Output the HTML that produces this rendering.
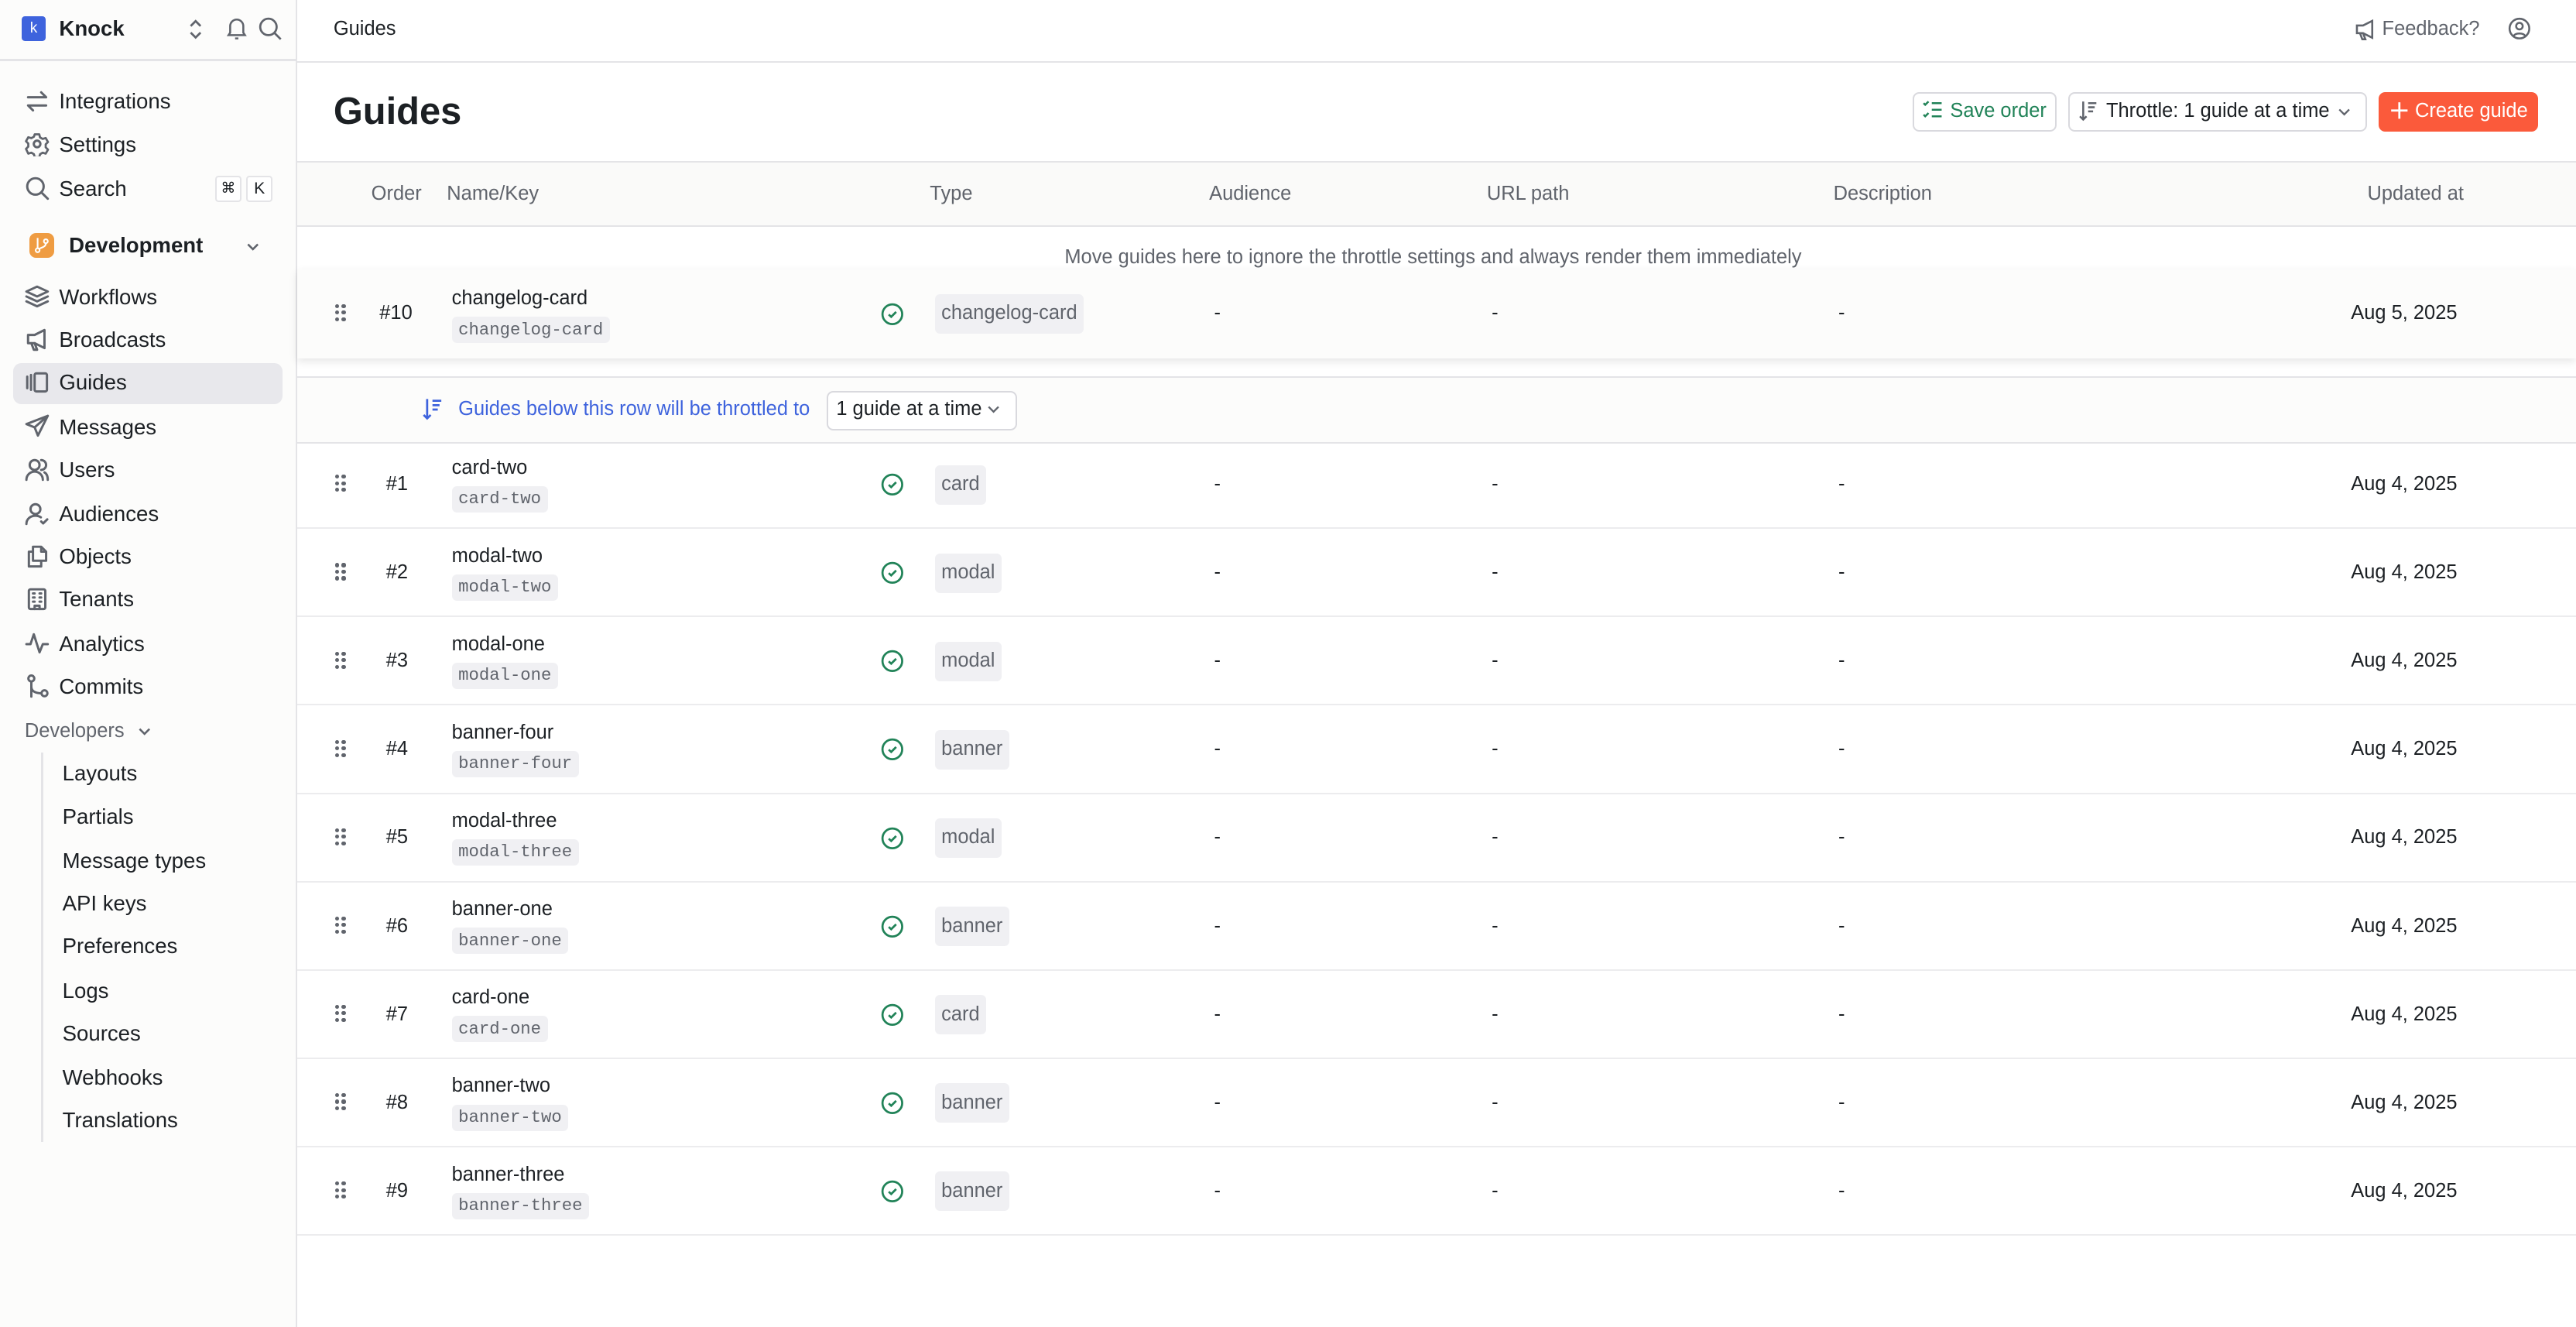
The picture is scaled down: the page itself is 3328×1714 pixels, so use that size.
<!DOCTYPE html>
<html><head><meta charset="utf-8">
<style>
html,body{margin:0;padding:0;background:#fff;overflow:hidden}
body{width:3328px;height:1714px}
#w{zoom:2.12245;width:1568px;height:808px;position:relative;font-family:"Liberation Sans",sans-serif;color:#1c2024;font-size:13px}
.a{position:absolute;white-space:nowrap}
#side{position:absolute;left:0;top:0;width:180px;height:808px;background:#fcfcfb;border-right:1px solid #e4e4e7}
.ni{position:absolute;left:15px;height:20px;line-height:20px;font-size:13px;color:#1c2024}
.ni svg{position:absolute;left:0;top:2px;width:15px;height:15px;fill:none;stroke:#60646c;stroke-width:1.4;stroke-linecap:round;stroke-linejoin:round}
.ni span{position:absolute;left:21px;top:0}
.sub{position:absolute;left:38px;font-size:13px;line-height:20px}
.hd{position:absolute;top:111px;font-size:12px;color:#60646c}
.row{position:absolute;left:181px;width:1387px;height:53px;border-bottom:1px solid #ececee;font-size:12px}
.row .c{position:absolute;line-height:16px}
.chip{display:inline-block;background:#f0f0f3;border-radius:3px;padding:4px 4px;line-height:16px;color:#60646c}
.mono{display:inline-block;font-family:"Liberation Mono",monospace;font-size:10.5px;background:#f0f0f3;border-radius:3px;padding:1px 4px;line-height:14px;color:#60646c}
.dots{position:absolute;left:23px;width:6px;height:11px}
.dots i{position:absolute;width:2.4px;height:2.4px;border-radius:50%;background:#60646c}
.chk{position:absolute;left:355px;width:14px;height:14px}
</style></head><body><div id="w">

<div id="side">
 <div class="a" style="left:13px;top:10px;width:15px;height:15px;background:#3e63dd;border-radius:2px;color:#fff;font-size:9px;text-align:center;line-height:15px">k</div>
 <div class="a" style="left:36px;top:10px;font-size:13px;font-weight:bold;line-height:15px">Knock</div>
 <svg class="a" style="left:113px;top:11px" width="12" height="14" viewBox="0 0 12 14" fill="none" stroke="#60646c" stroke-width="1.3"><path d="M3 5l3-3 3 3M3 9l3 3 3-3"/></svg>
 <svg class="a" style="left:137px;top:10px" width="14" height="15" viewBox="0 0 14 15" fill="none" stroke="#60646c" stroke-width="1.2"><path d="M3 10V6a4 4 0 018 0v4l1 1.5H2z M6 13.5h2"/></svg>
 <svg class="a" style="left:157px;top:10px" width="15" height="15" viewBox="0 0 15 15" fill="none" stroke="#60646c" stroke-width="1.3"><circle cx="6.5" cy="6.5" r="5"/><path d="M10.2 10.2L14 14"/></svg>
 <div class="a" style="left:0;top:36px;width:180px;height:1px;background:#e4e4e7"></div>

 <div class="ni" style="top:52px"><svg viewBox="0 0 15 15"><path d="M2 5h11l-3-3M13 10H2l3 3"/></svg><span>Integrations</span></div>
 <div class="ni" style="top:78px"><svg viewBox="0 0 15 15"><circle cx="7.5" cy="7.5" r="2"/><path d="M6 1.5h3l.5 2 1.7 1 2-.6 1.5 2.6-1.5 1.5v2l1.5 1.5-1.5 2.6-2-.6-1.7 1-.5 2H6l-.5-2-1.7-1-2 .6L.3 11l1.5-1.5v-2L.3 6l1.5-2.6 2 .6 1.7-1z" transform="scale(.93) translate(.5 .3)"/></svg><span>Settings</span></div>
 <div class="ni" style="top:105px"><svg viewBox="0 0 15 15"><circle cx="6.5" cy="6.5" r="5"/><path d="M10.2 10.2L14 14"/></svg><span>Search</span></div>
 <div class="a" style="left:131px;top:107px;width:14px;height:14px;border:1px solid #e4e4e7;border-radius:2px;background:#fff;font-size:9px;text-align:center;line-height:14px">⌘</div>
 <div class="a" style="left:150px;top:107px;width:14px;height:14px;border:1px solid #e4e4e7;border-radius:2px;background:#fff;font-size:10px;text-align:center;line-height:14px">K</div>

 <div class="a" style="left:18px;top:142px;width:15px;height:15px;background:#ef9c42;border-radius:4px"><svg width="15" height="15" viewBox="0 0 15 15" fill="none" stroke="#fff" stroke-width="1"><circle cx="5" cy="10.5" r="1.2"/><circle cx="10" cy="5" r="1.2"/><path d="M5 3v6.3M10 6.2c0 2.5-3 2.5-4.2 3.5"/></svg></div>
 <div class="a" style="left:42px;top:141px;font-size:13px;font-weight:bold;line-height:17px">Development</div>
 <svg class="a" style="left:148px;top:144px" width="12" height="12" viewBox="0 0 12 12" fill="none" stroke="#60646c" stroke-width="1.2"><path d="M3 4.5l3 3 3-3"/></svg>

 <div class="a" style="left:8px;top:221px;width:164px;height:25px;background:#e8e8ec;border-radius:5px"></div>
 <div class="ni" style="top:171px"><svg viewBox="0 0 15 15"><path d="M7.5 1.5L14 4.5 7.5 7.5 1 4.5z M1 7.5l6.5 3 6.5-3 M1 10.5l6.5 3 6.5-3"/></svg><span>Workflows</span></div>
 <div class="ni" style="top:197px"><svg viewBox="0 0 15 15"><path d="M2 5h4l6-3v11L6 10H2z M4 10l1.5 4h2L6 10"/></svg><span>Broadcasts</span></div>
 <div class="ni" style="top:223px"><svg viewBox="0 0 15 15"><rect x="6" y="2" width="7.5" height="11" rx="1"/><path d="M1.5 4v7M3.8 3v9"/></svg><span>Guides</span></div>
 <div class="ni" style="top:250px"><svg viewBox="0 0 15 15"><path d="M14 1L1 6l5 2 2 5z M6 8l8-7"/></svg><span>Messages</span></div>
 <div class="ni" style="top:276px"><svg viewBox="0 0 15 15"><circle cx="6" cy="5" r="3"/><path d="M1 14c0-3 2.5-5 5-5s5 2 5 5 M10 2a3 3 0 010 6 M12 9.5c1.5.8 2 2.5 2 4.5"/></svg><span>Users</span></div>
 <div class="ni" style="top:303px"><svg viewBox="0 0 15 15"><circle cx="6.5" cy="5" r="3"/><path d="M1 14c0-3 2.5-5 5.5-5 1.5 0 2.5.4 3.3 1 M10 12.5l1.2 1.2 2.5-2.5"/></svg><span>Audiences</span></div>
 <div class="ni" style="top:329px"><svg viewBox="0 0 15 15"><path d="M5 1.5h5l3 3V10H5z M10 1.5v3h3 M5 4.5H2.5V13.5H10V10"/></svg><span>Objects</span></div>
 <div class="ni" style="top:355px"><svg viewBox="0 0 15 15"><rect x="2.5" y="1.5" width="10" height="12" rx="1"/><path d="M5 4h1M9 4h1M5 6.5h1M9 6.5h1M5 9h1M9 9h1M6 13.5v-2h3v2"/></svg><span>Tenants</span></div>
 <div class="ni" style="top:382px"><svg viewBox="0 0 15 15"><path d="M1 8h2.5l2-6 3.5 11 2-5H14"/></svg><span>Analytics</span></div>
 <div class="ni" style="top:408px"><svg viewBox="0 0 15 15"><circle cx="4" cy="3" r="1.8"/><circle cx="12" cy="12" r="1.8"/><path d="M4 5v9M4 8c0 3 3 4 6 4"/></svg><span>Commits</span></div>
 <div class="a" style="left:15px;top:437px;font-size:12px;color:#60646c;line-height:16px">Developers</div>
 <svg class="a" style="left:82px;top:439px" width="12" height="12" viewBox="0 0 12 12" fill="none" stroke="#60646c" stroke-width="1.2"><path d="M3 4.5l3 3 3-3"/></svg>
 <div class="a" style="left:25px;top:458px;width:1.5px;height:237px;background:#e4e4e7"></div>
 <div class="sub" style="top:461px">Layouts</div>
 <div class="sub" style="top:487px">Partials</div>
 <div class="sub" style="top:514px">Message types</div>
 <div class="sub" style="top:540px">API keys</div>
 <div class="sub" style="top:566px">Preferences</div>
 <div class="sub" style="top:593px">Logs</div>
 <div class="sub" style="top:619px">Sources</div>
 <div class="sub" style="top:646px">Webhooks</div>
 <div class="sub" style="top:672px">Translations</div>
</div>

<!-- top bar -->
<div class="a" style="left:203px;top:10px;font-size:12px;line-height:16px">Guides</div>
<div class="a" style="left:181px;top:37px;width:1387px;height:1px;background:#e4e4e7"></div>
<svg class="a" style="left:1433px;top:11px" width="14" height="14" viewBox="0 0 15 15" fill="none" stroke="#60646c" stroke-width="1.3"><path d="M2 5h4l6-3v11L6 10H2z M4 10l1.5 4h2L6 10"/></svg>
<div class="a" style="left:1450px;top:10px;font-size:12px;color:#60646c;line-height:16px">Feedback?</div>
<svg class="a" style="left:1526px;top:10px" width="15" height="15" viewBox="0 0 15 15" fill="none" stroke="#60646c" stroke-width="1.2"><circle cx="7.5" cy="7.5" r="6"/><circle cx="7.5" cy="6" r="2"/><path d="M4 12c1-2 6-2 7 0"/></svg>

<div class="a" style="left:203px;top:54px;font-size:23px;font-weight:bold;line-height:28px">Guides</div>

<div class="a" style="left:1164px;top:56px;width:86px;height:22px;border:1px solid #d9d9de;border-radius:4px;background:#fff"></div>
<svg class="a" style="left:1170px;top:61px" width="13" height="13" viewBox="0 0 13 13" fill="none" stroke="#218358" stroke-width="1.2"><path d="M1 2l1 1 2-2M1 9l1 1 2-2M6 2h6M6 6h6M6 10h6"/></svg>
<div class="a" style="left:1187px;top:60px;font-size:12px;color:#218358;line-height:16px">Save order</div>
<div class="a" style="left:1259px;top:56px;width:180px;height:22px;border:1px solid #d9d9de;border-radius:4px;background:#fff"></div>
<svg class="a" style="left:1265px;top:61px" width="13" height="13" viewBox="0 0 13 13" fill="none" stroke="#60646c" stroke-width="1.2"><path d="M3 1v11M1 10l2 2 2-2M6 2h5M6 4.5h4M6 7h3"/></svg>
<div class="a" style="left:1282px;top:60px;font-size:12px;line-height:16px">Throttle: 1 guide at a time</div>
<svg class="a" style="left:1422px;top:63px" width="10" height="10" viewBox="0 0 10 10" fill="none" stroke="#60646c" stroke-width="1.1"><path d="M2 3.5l3 3 3-3"/></svg>
<div class="a" style="left:1448px;top:56px;width:97px;height:24px;border-radius:4px;background:#fb5a3b"></div>
<svg class="a" style="left:1454px;top:61px" width="13" height="13" viewBox="0 0 13 13" fill="none" stroke="#fff" stroke-width="1.3"><path d="M6.5 1.5v10M1.5 6.5h10"/></svg>
<div class="a" style="left:1470px;top:60px;font-size:12px;color:#fff;line-height:16px">Create guide</div>

<!-- header -->
<div class="a" style="left:181px;top:98px;width:1387px;height:38px;background:#fafaf9;border-top:1px solid #e4e4e7;border-bottom:1px solid #e4e4e7"></div>
<div class="hd" style="left:226px">Order</div>
<div class="hd" style="left:272px">Name/Key</div>
<div class="hd" style="left:566px">Type</div>
<div class="hd" style="left:736px">Audience</div>
<div class="hd" style="left:905px">URL path</div>
<div class="hd" style="left:1116px">Description</div>
<div class="hd" style="left:1441px">Updated at</div>

<div class="a" style="left:648px;top:149px;font-size:12px;color:#60646c;line-height:16px">Move guides here to ignore the throttle settings and always render them immediately</div>

<!-- pinned row -->
<div class="row" style="top:164px;height:54px;background:#fcfcfb;border-bottom:none;box-shadow:0 2px 5px rgba(0,0,0,.1)">
 <div class="dots" style="top:21px"><i style="left:0;top:0"></i><i style="left:4px;top:0"></i><i style="left:0;top:4px"></i><i style="left:4px;top:4px"></i><i style="left:0;top:8px"></i><i style="left:4px;top:8px"></i></div>
 <div class="c" style="left:50px;top:19px">#10</div>
 <div class="c" style="left:94px;top:10px">changelog-card</div>
 <div class="c" style="left:94px;top:28px"><span class="mono">changelog-card</span></div>
 <svg class="chk" style="top:20px" viewBox="0 0 14 14" fill="none" stroke="#218358" stroke-width="1.3"><circle cx="7" cy="7" r="6"/><path d="M4.8 7.2l1.5 1.4 3-3"/></svg>
 <div class="c" style="left:388px;top:15px"><span class="chip">changelog-card</span></div>
 <div class="c" style="left:558px;top:19px">-</div>
 <div class="c" style="left:727px;top:19px">-</div>
 <div class="c" style="left:938px;top:19px">-</div>
 <div class="c" style="left:1250px;top:19px">Aug 5, 2025</div>
</div>

<div class="a" style="left:181px;top:229px;width:1387px;height:39px;background:#fcfcfb;border-top:1px solid #e4e4e7;border-bottom:1px solid #e4e4e7"></div>
<svg class="a" style="left:257px;top:241px" width="14" height="15" viewBox="0 0 13 13" fill="none" stroke="#3e63dd" stroke-width="1.2"><path d="M3 1v11M1 10l2 2 2-2M6 2h5M6 4.5h4M6 7h3"/></svg>
<div class="a" style="left:279px;top:241px;font-size:12px;color:#3e63dd;line-height:16px">Guides below this row will be throttled to</div>
<div class="a" style="left:503px;top:238px;width:114px;height:22px;border:1px solid #d9d9de;border-radius:4px;background:#fff"></div>
<div class="a" style="left:509px;top:241px;font-size:12px;line-height:16px">1 guide at a time</div>
<svg class="a" style="left:600px;top:244px" width="10" height="10" viewBox="0 0 10 10" fill="none" stroke="#60646c" stroke-width="1.1"><path d="M2 3.5l3 3 3-3"/></svg>

<div id="rows"></div>
<script>
var d=[["#1","card-two","card"],["#2","modal-two","modal"],["#3","modal-one","modal"],["#4","banner-four","banner"],["#5","modal-three","modal"],["#6","banner-one","banner"],["#7","card-one","card"],["#8","banner-two","banner"],["#9","banner-three","banner"]];
var h="";d.forEach(function(r,i){var t=268+i*53.75;
h+='<div class="row" style="top:'+t+'px"><div class="dots" style="top:21px"><i style="left:0;top:0"></i><i style="left:4px;top:0"></i><i style="left:0;top:4px"></i><i style="left:4px;top:4px"></i><i style="left:0;top:8px"></i><i style="left:4px;top:8px"></i></div>'+
'<div class="c" style="left:54px;top:19px">'+r[0]+'</div><div class="c" style="left:94px;top:9px">'+r[1]+'</div><div class="c" style="left:94px;top:27px"><span class="mono">'+r[1]+'</span></div>'+
'<svg class="chk" style="top:20px" viewBox="0 0 14 14" fill="none" stroke="#218358" stroke-width="1.3"><circle cx="7" cy="7" r="6"/><path d="M4.8 7.2l1.5 1.4 3-3"/></svg>'+
'<div class="c" style="left:388px;top:15px"><span class="chip">'+r[2]+'</span></div><div class="c" style="left:558px;top:19px">-</div><div class="c" style="left:727px;top:19px">-</div><div class="c" style="left:938px;top:19px">-</div><div class="c" style="left:1250px;top:19px">Aug 4, 2025</div></div>';});
document.getElementById("rows").innerHTML=h;
</script>
</div></body></html>
